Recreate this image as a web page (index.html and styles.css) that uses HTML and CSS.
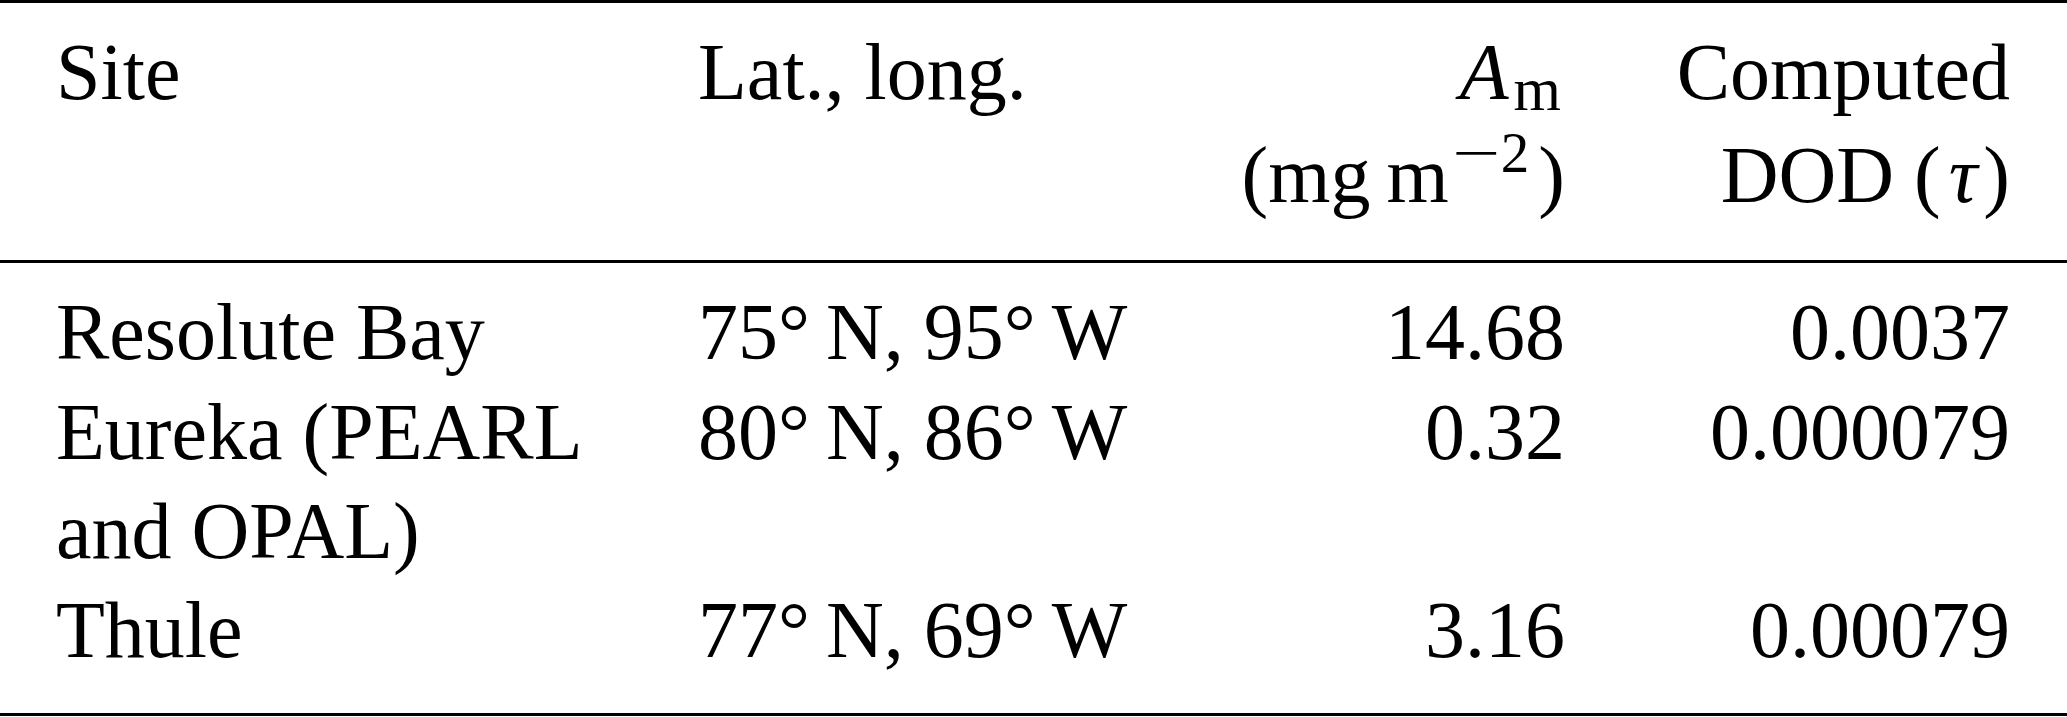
FILE: index.html
```html
<!DOCTYPE html>
<html>
<head>
  <meta charset="utf-8">
  <link rel="stylesheet" href="styles.css">
</head>

<body>
  <table class="sites">
    <colgroup>
      <col class="col-site">
      <col class="col-pos">
      <col class="col-am">
      <col class="col-dod">
    </colgroup>
    <thead>
      <tr>
        <th class="left">Site</th>
        <th class="left">Lat., long.</th>
        <th class="right"><i>A</i><span class="sub">m</span><br>(mg&thinsp;m<span class="sup"><span class="minus">&minus;</span>2</span>)</th>
        <th class="right">Computed<br>DOD (<i class="tau">&tau;</i>)</th>
      </tr>
    </thead>
    <tbody>
      <tr class="first">
        <td class="left">Resolute Bay</td>
        <td class="left">75°&thinsp;N, 95°&thinsp;W</td>
        <td class="right">14.68</td>
        <td class="right">0.0037</td>
      </tr>
      <tr>
        <td class="left">Eureka (PEARL<br>and OPAL)</td>
        <td class="left">80°&thinsp;N, 86°&thinsp;W</td>
        <td class="right">0.32</td>
        <td class="right">0.000079</td>
      </tr>
      <tr class="last">
        <td class="left">Thule</td>
        <td class="left">77°&thinsp;N, 69°&thinsp;W</td>
        <td class="right">3.16</td>
        <td class="right">0.00079</td>
      </tr>
    </tbody>
  </table>
</body>

</html>
```

FILE: styles.css
```css
body {
  margin: 0;
  background: #fff;
  color: #000;
  font-family: "Liberation Serif", "Times New Roman", serif;
  font-size: 80px;
}

.sites {
  width: 2067px;
  table-layout: fixed;
  border-collapse: separate;
  border-spacing: 0;
  font: inherit;
}

.col-site {
  width: 698px;
}

.col-pos {
  width: 542px;
}

.col-am {
  width: 325px;
}

.col-dod {
  width: 502px;
}

.sites th,
.sites td {
  padding: 0;
  vertical-align: top;
  font-weight: normal;
  white-space: nowrap;
}

.left {
  text-align: left;
}

.right {
  text-align: right;
}

.sites th:first-child,
.sites td:first-child {
  padding-left: 56px;
}

.sites th:last-child,
.sites td:last-child {
  padding-right: 57px;
}

/* header block between the top and middle rules */
.sites th {
  line-height: 103px;
  border-top: 3px solid #000;
  border-bottom: 3px solid #000;
  padding-top: 17.5px;
  padding-bottom: 33.5px;
}

.sites td {
  line-height: 99.3px;
}

.sites tr.first td {
  padding-top: 20.4px;
}

.sites tr.last td {
  padding-bottom: 32.4px;
  border-bottom: 3px solid #000;
}

.sub {
  font-size: 61px;
  line-height: 0;
  vertical-align: -11px;
  margin: 0 4px 0 5px;
}

.sup {
  font-size: 57px;
  line-height: 0;
  vertical-align: 30px;
  margin-right: 9px;
}

.minus {
  display: inline-block;
  transform: scaleX(1.5);
  margin: 0 9px 0 11px;
}

.tau {
  padding: 0 6px 0 8px;
}
```
